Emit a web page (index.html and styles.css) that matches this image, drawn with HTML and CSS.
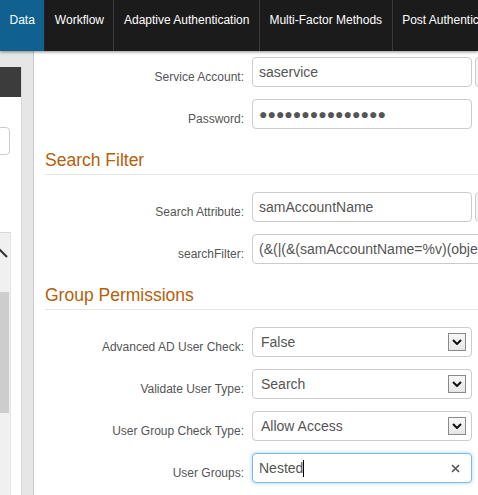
FILE: index.html
```html
<!DOCTYPE html>
<html lang="en">
<head>
  <meta charset="UTF-8">
  <meta name="viewport" content="width=device-width, initial-scale=1.0">
  <title>Data - LDAP Settings</title>
  <link rel="stylesheet" href="styles.css">
</head>
<body>
  <div class="top-nav">
    <a class="tab active" href="#">Data</a>
    <a class="tab" href="#">Workflow</a>
    <a class="tab" href="#">Adaptive Authentication</a>
    <a class="tab" href="#">Multi-Factor Methods</a>
    <a class="tab" href="#">Post Authentication</a>
  </div>

  <div class="page">
    <div class="sidebar">
      <div class="side-panel">
        <div class="side-header"></div>
        <div class="side-input"></div>
        <div class="side-list">
          <svg class="side-chevron" width="10" height="14" viewBox="0 0 10 14">
            <path d="M-9 12 L-1 4 L7 12" fill="none" stroke="#333" stroke-width="2"/>
          </svg>
          <div class="side-thumb"></div>
        </div>
      </div>
      <div class="side-strip"></div>
    </div>

    <div class="content">
      <div class="form-row">
        <label>Service Account:</label>
        <input class="field" type="text" value="saservice">
        <button class="field-btn"></button>
      </div>
      <div class="form-row">
        <label>Password:</label>
        <input class="field" type="text" value="●●●●●●●●●●●●●●●" readonly>
      </div>

      <h2 class="section-title">Search Filter</h2>
      <div class="form-row">
        <label>Search Attribute:</label>
        <input class="field" type="text" value="samAccountName">
        <button class="field-btn"></button>
      </div>
      <div class="form-row">
        <label>searchFilter:</label>
        <input class="field wide" type="text" value="(&amp;(|(&amp;(samAccountName=%v)(objectClass=user))))">
      </div>

      <h2 class="section-title">Group Permissions</h2>
      <div class="form-row">
        <label>Advanced AD User Check:</label>
        <div class="field select">
          <span>False</span>
          <span class="select-arrow">
            <svg width="10" height="6" viewBox="0 0 10 6"><path d="M1 1 L5 5 L9 1" fill="none" stroke="#111" stroke-width="2"/></svg>
          </span>
        </div>
      </div>
      <div class="form-row">
        <label>Validate User Type:</label>
        <div class="field select">
          <span>Search</span>
          <span class="select-arrow">
            <svg width="10" height="6" viewBox="0 0 10 6"><path d="M1 1 L5 5 L9 1" fill="none" stroke="#111" stroke-width="2"/></svg>
          </span>
        </div>
      </div>
      <div class="form-row">
        <label>User Group Check Type:</label>
        <div class="field select">
          <span>Allow Access</span>
          <span class="select-arrow">
            <svg width="10" height="6" viewBox="0 0 10 6"><path d="M1 1 L5 5 L9 1" fill="none" stroke="#111" stroke-width="2"/></svg>
          </span>
        </div>
      </div>
      <div class="form-row">
        <label>User Groups:</label>
        <div class="field focused">
          <span>Nested</span><span class="caret"></span>
          <svg class="clear" width="9" height="9" viewBox="0 0 9 9">
            <path d="M1 1 L8 8 M8 1 L1 8" stroke="#555" stroke-width="1.6"/>
          </svg>
        </div>
      </div>
    </div>
  </div>
</body>
</html>
```

FILE: styles.css
```css
body {
  margin: 0;
  width: 478px;
  height: 495px;
  overflow: hidden;
  font-family: "Liberation Sans", Arial, sans-serif;
  background: #fff;
}
.top-nav {
  position: relative;
  z-index: 1;
  display: flex;
  height: 51px;
  background: #1b1b1b;
  box-shadow: 0 1px 3px rgba(0, 0, 0, 0.45);
  overflow: hidden;
  white-space: nowrap;
}
.tab {
  flex-shrink: 0;
  padding: 13px 9.5px 0;
  border-right: 1px solid #3b3b3b;
  color: #fff;
  font-size: 12px;
  line-height: 14px;
  text-decoration: none;
}
.tab.active {
  background: #10618f;
  border-right-color: #222;
}
.page {
  display: flex;
  height: 444px;
}
.sidebar {
  display: flex;
  flex-shrink: 0;
  width: 33px;
  background: #e6e6e6;
  border-right: 1px solid #c9c9c9;
}
.side-panel {
  display: flex;
  flex-direction: column;
  width: 21px;
  margin-top: 16px;
  background: #fff;
  border-right: 1px solid #d6d6d6;
  overflow: hidden;
}
.side-header {
  flex-shrink: 0;
  height: 30px;
  background: #3c3c3c;
}
.side-input {
  flex-shrink: 0;
  box-sizing: border-box;
  width: 20px;
  height: 28px;
  margin: 30px 0 0 -10px;
  border: 1px solid #ccc;
  border-radius: 4px;
}
.side-list {
  flex: 1;
  width: 10px;
  margin-top: 77px;
  background: #f0f0f0;
  border-top: 1px solid #d9d9d9;
  border-right: 1px solid #e2e2e2;
}
.side-chevron {
  display: block;
  margin-top: 12px;
}
.side-thumb {
  width: 9px;
  height: 121px;
  margin-top: 33px;
  background: #cdcdcd;
}
.side-strip {
  width: 11px;
}
.content {
  display: flex;
  flex-direction: column;
  flex: 1;
  min-width: 0;
  padding: 6px 0 0 11px;
  overflow: hidden;
}
.form-row {
  display: flex;
  flex-shrink: 0;
  height: 30px;
  margin-bottom: 12px;
}
.form-row label {
  flex-shrink: 0;
  width: 199px;
  margin-right: 8px;
  padding-top: 13px;
  text-align: right;
  font-size: 12px;
  line-height: 14px;
  color: #555;
}
.field {
  flex-shrink: 0;
  box-sizing: border-box;
  width: 220px;
  height: 30px;
  margin: 0;
  padding: 0 6px;
  border: 1px solid #ccc;
  border-radius: 4px;
  background: #fff;
  font-family: "Liberation Sans", Arial, sans-serif;
  font-size: 14px;
  color: #555;
  outline: none;
}
.field.wide {
  width: 270px;
}
.field-btn {
  flex-shrink: 0;
  width: 30px;
  height: 30px;
  margin-left: 3px;
  border: 1px solid #ccc;
  border-radius: 4px;
  background: #f5f5f5;
}
.section-title {
  flex-shrink: 0;
  margin: 9px 0 17px;
  padding-bottom: 4px;
  border-bottom: 1px solid #e5e5e5;
  font-size: 17.5px;
  line-height: 20px;
  font-weight: normal;
  color: #b5600b;
}
.select {
  display: flex;
  align-items: center;
  justify-content: space-between;
  padding: 0 5px 0 8px;
}
.select-arrow {
  display: flex;
  align-items: center;
  justify-content: center;
  box-sizing: border-box;
  width: 18px;
  height: 18px;
  border: 1px solid #8a8a8a;
  background: linear-gradient(#f8f8f8, #e6e6e6);
}
.field.focused {
  display: flex;
  align-items: center;
  border-color: #7ab8ec;
  box-shadow: 0 0 4px rgba(102, 175, 233, 0.55);
}
.caret {
  width: 1px;
  height: 17px;
  background: #000;
}
.clear {
  margin-left: auto;
  margin-right: 5px;
}
```
